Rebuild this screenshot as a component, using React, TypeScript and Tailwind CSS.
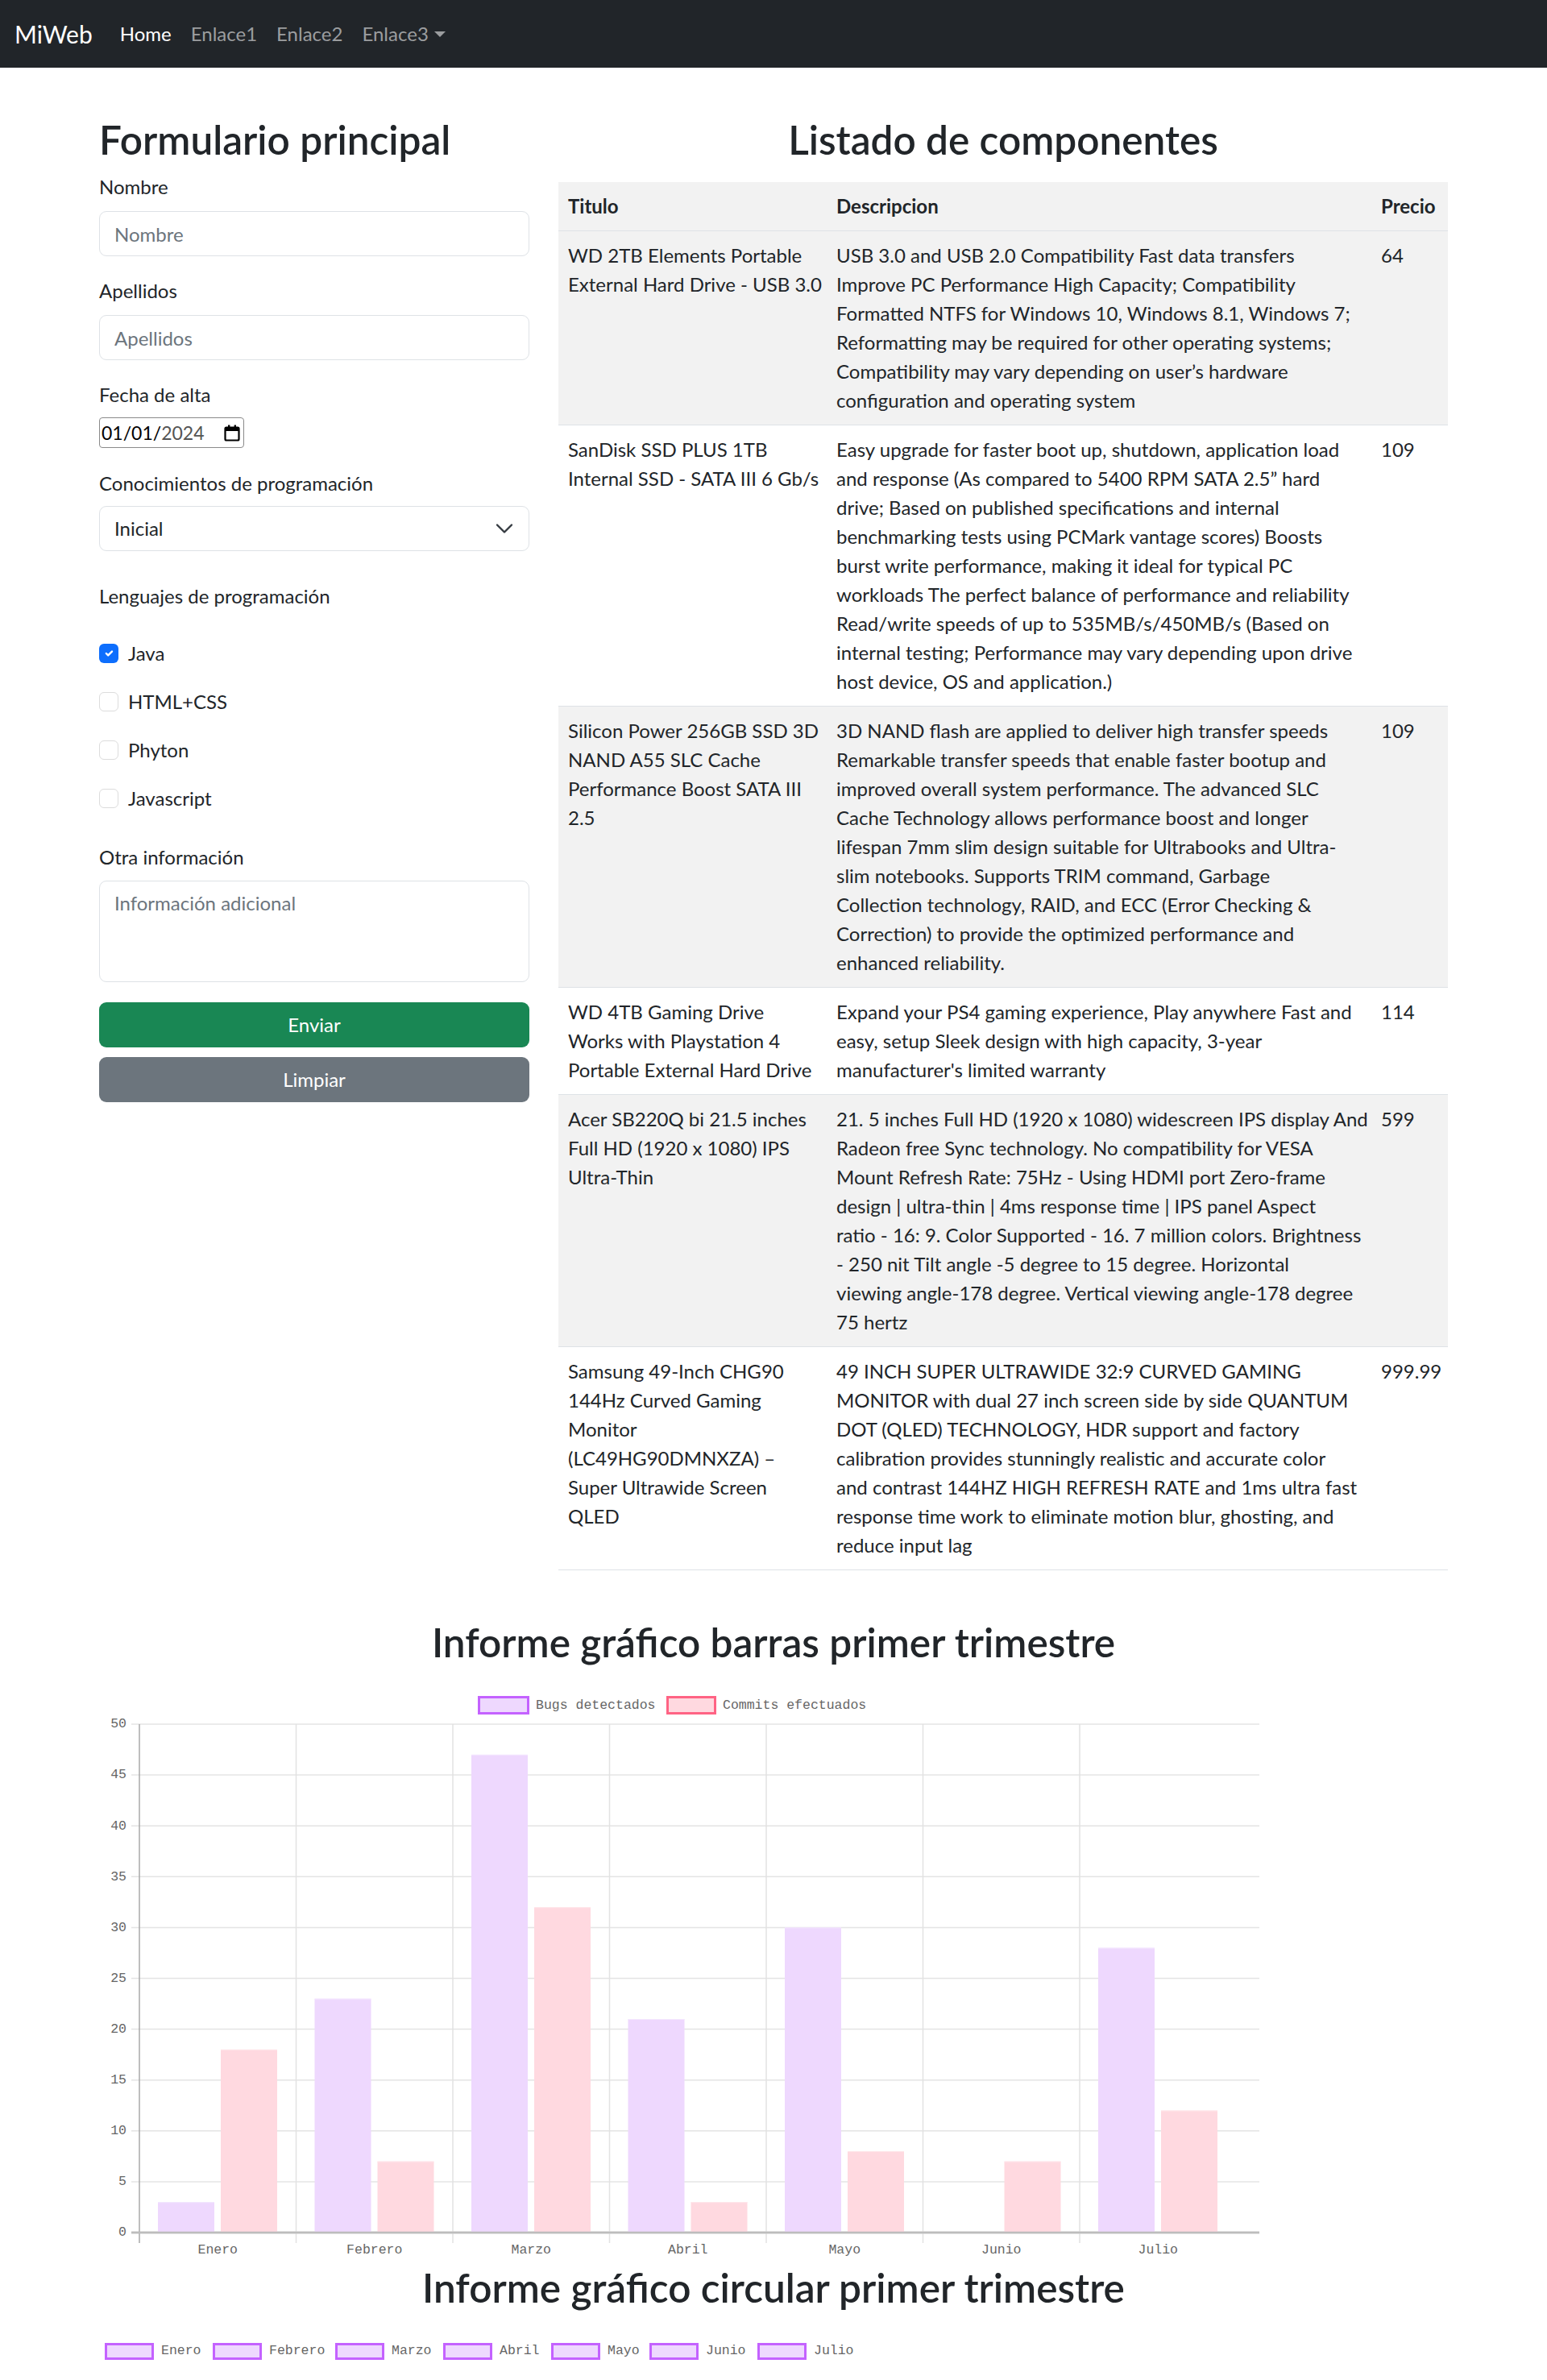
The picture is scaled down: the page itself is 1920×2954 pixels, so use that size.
import React from "react";

const rows = [
  {
    t: ["WD 2TB Elements Portable", "External Hard Drive - USB 3.0"],
    d: [
      "USB 3.0 and USB 2.0 Compatibility Fast data transfers",
      "Improve PC Performance High Capacity; Compatibility",
      "Formatted NTFS for Windows 10, Windows 8.1, Windows 7;",
      "Reformatting may be required for other operating systems;",
      "Compatibility may vary depending on user’s hardware",
      "configuration and operating system",
    ],
    p: "64",
  },
  {
    t: ["SanDisk SSD PLUS 1TB", "Internal SSD - SATA III 6 Gb/s"],
    d: [
      "Easy upgrade for faster boot up, shutdown, application load",
      "and response (As compared to 5400 RPM SATA 2.5” hard",
      "drive; Based on published specifications and internal",
      "benchmarking tests using PCMark vantage scores) Boosts",
      "burst write performance, making it ideal for typical PC",
      "workloads The perfect balance of performance and reliability",
      "Read/write speeds of up to 535MB/s/450MB/s (Based on",
      "internal testing; Performance may vary depending upon drive",
      "host device, OS and application.)",
    ],
    p: "109",
  },
  {
    t: ["Silicon Power 256GB SSD 3D", "NAND A55 SLC Cache", "Performance Boost SATA III", "2.5"],
    d: [
      "3D NAND flash are applied to deliver high transfer speeds",
      "Remarkable transfer speeds that enable faster bootup and",
      "improved overall system performance. The advanced SLC",
      "Cache Technology allows performance boost and longer",
      "lifespan 7mm slim design suitable for Ultrabooks and Ultra-",
      "slim notebooks. Supports TRIM command, Garbage",
      "Collection technology, RAID, and ECC (Error Checking &",
      "Correction) to provide the optimized performance and",
      "enhanced reliability.",
    ],
    p: "109",
  },
  {
    t: ["WD 4TB Gaming Drive", "Works with Playstation 4", "Portable External Hard Drive"],
    d: [
      "Expand your PS4 gaming experience, Play anywhere Fast and",
      "easy, setup Sleek design with high capacity, 3-year",
      "manufacturer's limited warranty",
    ],
    p: "114",
  },
  {
    t: ["Acer SB220Q bi 21.5 inches", "Full HD (1920 x 1080) IPS", "Ultra-Thin"],
    d: [
      "21. 5 inches Full HD (1920 x 1080) widescreen IPS display And",
      "Radeon free Sync technology. No compatibility for VESA",
      "Mount Refresh Rate: 75Hz - Using HDMI port Zero-frame",
      "design | ultra-thin | 4ms response time | IPS panel Aspect",
      "ratio - 16: 9. Color Supported - 16. 7 million colors. Brightness",
      "- 250 nit Tilt angle -5 degree to 15 degree. Horizontal",
      "viewing angle-178 degree. Vertical viewing angle-178 degree",
      "75 hertz",
    ],
    p: "599",
  },
  {
    t: [
      "Samsung 49-Inch CHG90",
      "144Hz Curved Gaming",
      "Monitor",
      "(LC49HG90DMNXZA) –",
      "Super Ultrawide Screen",
      "QLED",
    ],
    d: [
      "49 INCH SUPER ULTRAWIDE 32:9 CURVED GAMING",
      "MONITOR with dual 27 inch screen side by side QUANTUM",
      "DOT (QLED) TECHNOLOGY, HDR support and factory",
      "calibration provides stunningly realistic and accurate color",
      "and contrast 144HZ HIGH REFRESH RATE and 1ms ultra fast",
      "response time work to eliminate motion blur, ghosting, and",
      "reduce input lag",
    ],
    p: "999.99",
  },
];

const months = ["Enero", "Febrero", "Marzo", "Abril", "Mayo", "Junio", "Julio"];
const bugs = [3, 23, 47, 21, 30, 0, 28];
const commits = [18, 7, 32, 3, 8, 7, 12];

const AXIS_Y0 = 2770;
const UNIT = (2770 - 2139) / 50;
const X0 = 173;
const CAT = 194.5;
const MONO = "'Liberation Mono', 'DejaVu Sans Mono', monospace";

function Lines({ lines }: { lines: string[] }) {
  return (
    <>
      {lines.map((l, i) => (
        <span key={i} className="block whitespace-nowrap">
          {l}
        </span>
      ))}
    </>
  );
}

function Check({ label, checked }: { label: string; checked?: boolean }) {
  return (
    <div className="flex h-[36px] items-start mb-[24px]">
      {checked ? (
        <span className="mt-[6px] w-[24px] h-[24px] rounded-[6px] bg-[#0d6efd] flex items-center justify-center">
          <svg width="16" height="16" viewBox="0 0 20 20">
            <path d="M6 10l3 3l6-6" fill="none" stroke="#fff" strokeWidth="3" strokeLinecap="round" strokeLinejoin="round" />
          </svg>
        </span>
      ) : (
        <span className="mt-[6px] w-[24px] h-[24px] rounded-[6px] border border-[#dcdcdc] bg-white" />
      )}
      <span className="ml-[12px] text-[24px] leading-[36px]">{label}</span>
    </div>
  );
}

function BarChart() {
  const ticks = [0, 5, 10, 15, 20, 25, 30, 35, 40, 45, 50];
  return (
    <svg className="block" width={1920} height={743} viewBox="0 2066 1920 743">
      <rect x={594.5} y={2105.5} width={61} height={20} fill="#eed8fe" stroke="#c462ff" strokeWidth={3} />
      <text x={665} y={2116} fontFamily={MONO} fontSize={16.5} fill="#666" dominantBaseline="middle">
        Bugs detectados
      </text>
      <rect x={828.5} y={2105.5} width={59} height={20} fill="#ffd9e0" stroke="#ff6384" strokeWidth={3} />
      <text x={897} y={2116} fontFamily={MONO} fontSize={16.5} fill="#666" dominantBaseline="middle">
        Commits efectuados
      </text>
      {ticks.map((t) => {
        const y = AXIS_Y0 - t * UNIT;
        return (
          <g key={t}>
            <line x1={163} x2={1563} y1={y} y2={y} stroke={t === 0 ? "#bdbdbd" : "#e4e4e4"} strokeWidth={t === 0 ? 2.5 : 1.5} />
            <text x={157} y={y} fontFamily={MONO} fontSize={16.5} fill="#666" textAnchor="end" dominantBaseline="middle">
              {t}
            </text>
          </g>
        );
      })}
      {[1, 2, 3, 4, 5, 6].map((k) => (
        <line key={k} x1={X0 + k * CAT} x2={X0 + k * CAT} y1={2139} y2={2783} stroke="#e2e2e2" strokeWidth={1.5} />
      ))}
      {months.map((m, i) => {
        const L = X0 + i * CAT;
        const hb = bugs[i] * UNIT;
        const hc = commits[i] * UNIT;
        return (
          <g key={m}>
            {hb > 0 && <rect x={L + 23} y={AXIS_Y0 - hb} width={70} height={hb} fill="#eed8fe" />}
            {hb > 0 && <line x1={L + 23} x2={L + 93} y1={AXIS_Y0 - hb + 0.5} y2={AXIS_Y0 - hb + 0.5} stroke="#f3e6fe" strokeWidth={1} />}
            <rect x={L + 101} y={AXIS_Y0 - hc} width={70} height={hc} fill="#ffd9e0" />
            <line x1={L + 101} x2={L + 171} y1={AXIS_Y0 - hc + 0.5} y2={AXIS_Y0 - hc + 0.5} stroke="#ffe6ea" strokeWidth={1} />
            <text x={L + CAT / 2} y={2792} fontFamily={MONO} fontSize={16.5} fill="#666" textAnchor="middle" dominantBaseline="middle">
              {m}
            </text>
          </g>
        );
      })}
      <line x1={X0} x2={X0} y1={2139} y2={2783} stroke="#a8a8a8" strokeWidth={1.5} />
      <line x1={163} x2={1563} y1={AXIS_Y0} y2={AXIS_Y0} stroke="#bdbdbd" strokeWidth={2.5} />
    </svg>
  );
}

function PieLegend() {
  const xs = [130, 264, 416, 550, 684, 806, 940];
  return (
    <svg className="block" width={1920} height={87} viewBox="0 2867 1920 87">
      {months.map((m, i) => (
        <g key={m}>
          <rect x={xs[i] + 1.5} y={2908.5} width={58} height={18} fill="#eed8fe" stroke="#c462ff" strokeWidth={3} />
          <text x={xs[i] + 70} y={2917} fontFamily={MONO} fontSize={16.5} fill="#666" dominantBaseline="middle">
            {m}
          </text>
        </g>
      ))}
    </svg>
  );
}

export default function App() {
  return (
    <div className="min-h-[2954px] w-[1920px] bg-white text-[#212529] font-[Lato,'Noto_Sans',sans-serif] text-[24px] leading-[36px] overflow-hidden">
      <nav className="h-[84px] bg-[#212529] flex items-center px-[18px]">
        <span className="text-[30px] leading-[45px] text-white mr-[22px]">MiWeb</span>
        <ul className="flex items-center">
          <li className="px-[12px] text-white">Home</li>
          <li className="px-[12px] text-[#9b9d9f]">Enlace1</li>
          <li className="px-[12px] text-[#9b9d9f]">Enlace2</li>
          <li className="px-[12px] text-[#9b9d9f] flex items-center">
            Enlace3
            <span className="ml-[7px] w-0 h-0 border-l-[7px] border-r-[7px] border-t-[7px] border-l-transparent border-r-transparent border-t-[#9b9d9f]" />
          </li>
        </ul>
      </nav>

      <div className="mx-auto w-[1710px] px-[18px]">
        <div className="flex mx-[-18px] pt-[60px]">
          <div className="w-[570px] px-[18px]">
            <h2 className="text-[49.5px] leading-[58px] font-semibold mb-[12px]">Formulario principal</h2>

            <div className="mb-[25px]">
              <div className="mb-[12px]">Nombre</div>
              <input
                className="block w-full h-[56px] border border-[#dee2e6] rounded-[9px] px-[18px] text-[24px] placeholder:text-[#6c757d] outline-none"
                placeholder="Nombre"
              />
            </div>
            <div className="mb-[25px]">
              <div className="mb-[12px]">Apellidos</div>
              <input
                className="block w-full h-[56px] border border-[#dee2e6] rounded-[9px] px-[18px] text-[24px] placeholder:text-[#6c757d] outline-none"
                placeholder="Apellidos"
              />
            </div>
            <div className="mb-[26px]">
              <div className="mb-[10px]">Fecha de alta</div>
              <div className="flex items-center w-[180px] h-[38px] border border-[#8a8a8a] rounded-[4px] pl-[2px] pr-[4px]">
                <span className="text-[23px] text-black">01/01/</span>
                <span className="text-[23px] text-[#545454]">2024</span>
                <span className="ml-auto flex items-center">
                  <svg width="20" height="21" viewBox="0 0 20 21">
                    <rect x="1.5" y="3.5" width="17" height="16" rx="1.5" fill="none" stroke="#000" strokeWidth="2.2" />
                    <rect x="1.5" y="3.5" width="17" height="4.5" fill="#000" />
                    <rect x="5" y="0.5" width="2.4" height="4" fill="#000" />
                    <rect x="12.6" y="0.5" width="2.4" height="4" fill="#000" />
                  </svg>
                </span>
              </div>
            </div>
            <div className="mb-[38px]">
              <div className="mb-[10px]">Conocimientos de programación</div>
              <div className="flex items-center justify-between h-[56px] border border-[#dee2e6] rounded-[9px] pl-[18px] pr-[18px]">
                <span>Inicial</span>
                <svg width="24" height="18" viewBox="0 0 16 12">
                  <path d="M2 3l6 6 6-6" fill="none" stroke="#343a40" strokeWidth="1.6" strokeLinecap="round" strokeLinejoin="round" />
                </svg>
              </div>
            </div>
            <div className="mb-[35px]">Lenguajes de programación</div>
            <Check label="Java" checked />
            <Check label="HTML+CSS" />
            <Check label="Phyton" />
            <Check label="Javascript" />
            <div className="pt-[13px]">
              <div className="mb-[11px]">Otra información</div>
              <textarea
                className="block w-full h-[126px] border border-[#dee2e6] rounded-[9px] px-[18px] py-[9px] text-[24px] leading-[36px] placeholder:text-[#6c757d] outline-none resize-none"
                placeholder="Información adicional"
              />
            </div>
            <button className="mt-[25px] block w-full h-[56px] rounded-[9px] bg-[#198754] text-white text-[24px]">Enviar</button>
            <button className="mt-[12px] block w-full h-[56px] rounded-[9px] bg-[#6c757d] text-white text-[24px]">Limpiar</button>
          </div>

          <div className="w-[1140px] px-[18px]">
            <h2 className="text-[49.5px] leading-[58px] font-semibold text-center mb-[24px]">Listado de componentes</h2>
            <table className="w-full table-fixed border-collapse">
              <colgroup>
                <col className="w-[333px]" />
                <col className="w-[676px]" />
                <col className="w-[95px]" />
              </colgroup>
              <thead>
                <tr className="bg-[#f2f2f2]">
                  <th className="text-left font-bold p-[12px] border-b border-[#dee2e6]">Titulo</th>
                  <th className="text-left font-bold p-[12px] border-b border-[#dee2e6]">Descripcion</th>
                  <th className="text-left font-bold p-[12px] border-b border-[#dee2e6]">Precio</th>
                </tr>
              </thead>
              <tbody>
                {rows.map((r, i) => (
                  <tr key={i} className={i % 2 === 0 ? "bg-[#f2f2f2]" : "bg-white"}>
                    <td className="align-top p-[12px] border-b border-[#dee2e6]">
                      <Lines lines={r.t} />
                    </td>
                    <td className="align-top p-[12px] border-b border-[#dee2e6]">
                      <Lines lines={r.d} />
                    </td>
                    <td className="align-top p-[12px] border-b border-[#dee2e6] whitespace-nowrap">{r.p}</td>
                  </tr>
                ))}
              </tbody>
            </table>
          </div>
        </div>
      </div>

      <h2 className="mt-[60px] text-[49.5px] leading-[58px] font-semibold text-center">Informe gráfico barras primer trimestre</h2>
      <BarChart />
      <h2 className="text-[49.5px] leading-[58px] font-semibold text-center">Informe gráfico circular primer trimestre</h2>
      <PieLegend />
    </div>
  );
}
